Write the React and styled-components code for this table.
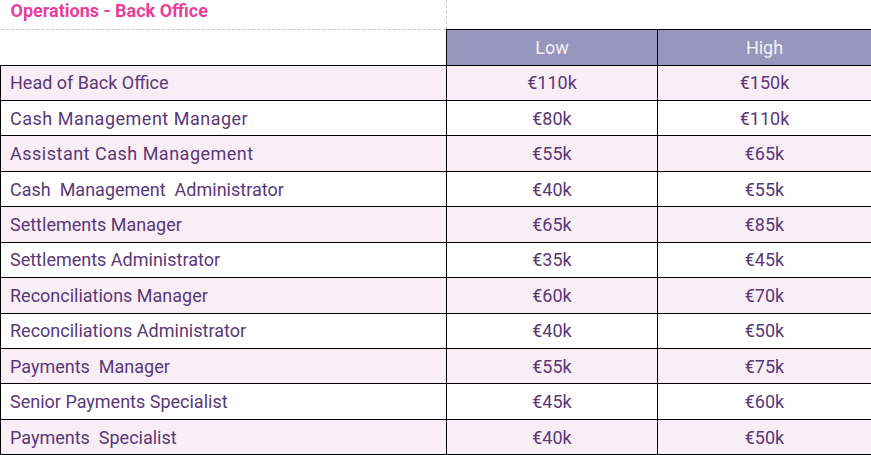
import React from 'react';
import styled, { createGlobalStyle } from 'styled-components';

const GlobalStyle = createGlobalStyle`
  html, body {
    margin: 0;
    padding: 0;
    background: #ffffff;
  }
  body {
    font-family: Roboto, "Liberation Sans", sans-serif;
  }
`;

const Table = styled.table`
  width: 871px;
  border-collapse: collapse;
  table-layout: fixed;
  font-family: Roboto, "Liberation Sans", sans-serif;
`;

const Col = styled.col`
  width: ${props => props.w}px;
`;

const TitleCell = styled.td`
  height: 29px;
  padding: 0 0 6px 10px;
  box-sizing: border-box;
  border-bottom: 1px dashed #c9c2d2;
  color: #e8409a;
  font-size: 18px;
  font-weight: 700;
  vertical-align: top;
  line-height: 22px;
  white-space: nowrap;
`;

const TitleSpacer = styled.td`
  border-left: 1px dashed #c9c2d2;
  border-right: 1px dashed #c9c2d2;
`;

const BlankHead = styled.th``;

const HeadCell = styled.th`
  height: 35px;
  padding: 0;
  background: #9896bd;
  color: #f6eff6;
  font-size: 18px;
  font-weight: 400;
  text-align: center;
  border: 1px solid #000;
`;

const Row = styled.tr`
  height: 35.45px;
  background: ${props => (props.$shaded ? '#f9eef5' : '#ffffff')};
`;

const RoleCell = styled.td`
  padding: 0 0 0 9px;
  border: 1px solid #000;
  color: #5a3878;
  font-size: 18px;
  white-space: pre;
  letter-spacing: ${props => (props.$spaced ? '0.5px' : 'normal')};
`;

const ValueCell = styled.td`
  padding: 0;
  border: 1px solid #000;
  color: #5a3878;
  font-size: 18px;
  text-align: center;
`;

const rows = [
  { role: 'Head of Back Office', low: '€110k', high: '€150k' },
  { role: 'Cash Management Manager', low: '€80k', high: '€110k', spaced: true },
  { role: 'Assistant Cash Management', low: '€55k', high: '€65k', spaced: true },
  { role: 'Cash  Management  Administrator', low: '€40k', high: '€55k' },
  { role: 'Settlements Manager', low: '€65k', high: '€85k' },
  { role: 'Settlements Administrator', low: '€35k', high: '€45k' },
  { role: 'Reconciliations Manager', low: '€60k', high: '€70k' },
  { role: 'Reconciliations Administrator', low: '€40k', high: '€50k' },
  { role: 'Payments  Manager', low: '€55k', high: '€75k' },
  { role: 'Senior Payments Specialist', low: '€45k', high: '€60k' },
  { role: 'Payments  Specialist', low: '€40k', high: '€50k' },
];

const App = () => (
  <>
    <GlobalStyle />
    <Table>
      <colgroup>
        <Col w={446} />
        <Col w={211} />
        <Col w={214} />
      </colgroup>
      <thead>
        <tr>
          <TitleCell>Operations - Back Office</TitleCell>
          <TitleSpacer colSpan={2} />
        </tr>
        <tr>
          <BlankHead />
          <HeadCell>Low</HeadCell>
          <HeadCell>High</HeadCell>
        </tr>
      </thead>
      <tbody>
        {rows.map(({ role, low, high, spaced }, index) => (
          <Row key={role} $shaded={index % 2 === 0}>
            <RoleCell $spaced={spaced}>{role}</RoleCell>
            <ValueCell>{low}</ValueCell>
            <ValueCell>{high}</ValueCell>
          </Row>
        ))}
      </tbody>
    </Table>
  </>
);

export default App;
